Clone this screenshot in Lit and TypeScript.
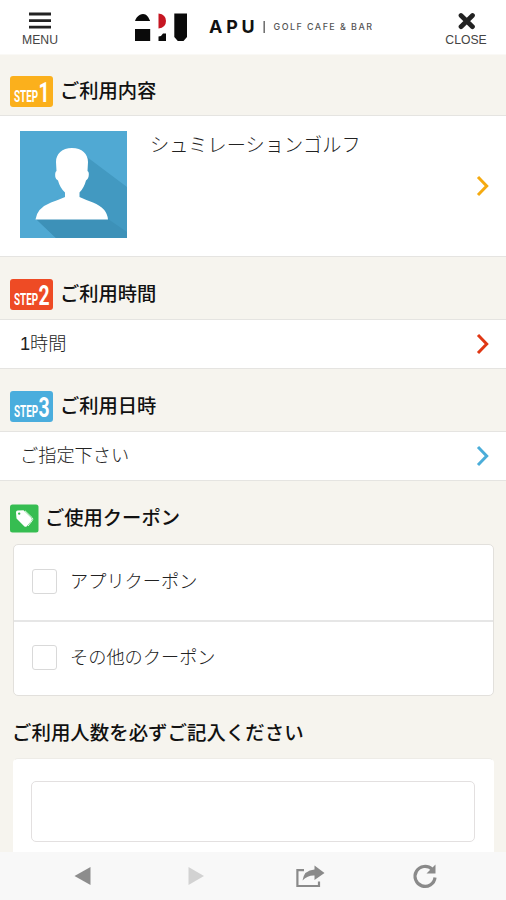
import { LitElement, html, css } from "lit";
import { customElement, property } from "lit/decorators.js";

const font = css`"Liberation Sans", "Noto Sans CJK JP", sans-serif`;

@customElement("step-badge")
class StepBadge extends LitElement {
  @property() num = "1";
  @property() color = "#fbb01c";
  static styles = css`
    :host { display: block; width: 43px; height: 31px; }
    svg { display: block; overflow: visible; }
    text { font-family: Roboto, "Liberation Sans", sans-serif; font-weight: 700; fill: #fff; }
    .word { font-size: 15.6px; }
    .num { font-size: 28.5px; }
  `;
  render() {
    return html`<svg width="43" height="31" viewBox="0 0 43 31">
      <rect width="43" height="31" rx="3" fill=${this.color}></rect>
      <text class="word" transform="translate(4 25.5) scale(.635 1)">STEP</text>
      <text class="num" transform="translate(28.6 25.5) scale(.68 1)">${this.num}</text>
    </svg>`;
  }
}

@customElement("section-title")
class SectionTitle extends LitElement {
  static styles = css`
    :host { display: flex; align-items: center; gap: 7px; height: 31px; padding: 0 10px; }
    .label { font: 500 19.3px/31px ${font}; color: #111; white-space: nowrap; }
  `;
  render() {
    return html`<slot name="icon"></slot><span class="label"><slot></slot></span>`;
  }
}

@customElement("link-row")
class LinkRow extends LitElement {
  @property() color = "#f5a912";
  static styles = css`
    :host {
      display: flex; align-items: center; justify-content: space-between;
      box-sizing: border-box; padding: 0 16px 0 20px; background: #fff;
      border-top: 1px solid #e5e4e1; border-bottom: 1px solid #e5e4e1;
      font: 300 18.2px/27px ${font}; color: #222;
    }
    .body { display: flex; flex: 1; }
  `;
  render() {
    return html`<div class="body"><slot></slot></div>
      <svg width="14" height="22" viewBox="0 0 14 22">
        <path d="M2 2 L10.700 11 L2 20" fill="none" stroke=${this.color} stroke-width="3"></path>
      </svg>`;
  }
}

@customElement("app-root")
class AppRoot extends LitElement {
  static styles = css`
    :host {
      display: flex; flex-direction: column; height: 900px; overflow: hidden;
      background: #f6f4ee; font-family: ${font}; color: #222;
    }
    header {
      display: flex; justify-content: space-between; flex: none; height: 55px;
      box-sizing: border-box; background: #fff; border-bottom: 1px solid #faf9f6;
    }
    .action {
      display: flex; flex-direction: column; align-items: center; width: 80px; gap: 3px;
      padding-top: 12px; box-sizing: border-box; font-size: 12.2px; line-height: 15px; color: #444;
    }
    .action svg { display: block; height: 18px; }
    .brand { display: flex; align-items: center; width: 238px; }
    .mark { margin: 0 21px 0 1px; flex: none; }
    .name { font: 700 18px/20px Inter, sans-serif; fill: #111; }
    .tag { font: 500 9px/10px Inter, sans-serif; fill: #555; }
    main { flex: 1; min-height: 0; overflow: hidden; }
    .t1 { margin-top: 21px; margin-bottom: 8px; }
    .t2 { margin-top: 22px; margin-bottom: 9px; }
    .t3 { margin-top: 22px; margin-bottom: 9px; }
    .t4 { margin-top: 22px; margin-bottom: 10px; gap: 6px; }
    .profile { height: 142px; }
    .single { height: 50px; }
    .photo { display: block; margin: -4px 23px 0 0; }
    .service { font-size: 19.2px; line-height: 28px; margin-top: -3px; }
    .card {
      margin: 0 12px 0 13px; background: #fff; border: 1px solid #e2e0dc;
      border-radius: 5px; box-sizing: border-box;
    }
    .option {
      display: flex; align-items: center; gap: 13px; height: 75px; box-sizing: border-box;
      padding-left: 18px; font: 300 18.2px/27px ${font};
    }
    .option + .option { border-top: 2px solid #e6e6e6; }
    .box {
      width: 25px; height: 25px; box-sizing: border-box; border: 1.5px solid #d9d9d9;
      border-radius: 3px; margin-top: -2px;
    }
    .question { margin: 23px 12px 10px; font: 500 19.45px/29px ${font}; color: #111; white-space: nowrap; }
    .form { padding: 22px 18px; height: 140px; border-color: #eeece7; border-left-color: #fff; border-right-color: #fff; }
    .input { height: 61px; border: 1px solid #e3e0e0; border-radius: 5px; box-sizing: border-box; margin: 0 0 0 -1px; }
    footer { flex: none; height: 48px; background: #f8f8f8; }
    footer svg { display: block; }
  `;

  render() {
    return html`
      <header>
        <div class="action">
          <svg width="22" height="18" viewBox="0 0 22 18"><path d="M0 2H22M0 8.700H22M0 15.200H22" stroke="#222" stroke-width="2.800"></path></svg>
          <span>MENU</span>
        </div>
        <div class="brand">
          <svg class="mark" width="52" height="29" viewBox="0 0 52 29">
            <path d="M0 8Q1 4 5 1.700Q8 .2 11 1.700Q14 4 15.200 8ZM0 16H15.200V28H0ZM23.500 23.500Q27 23 28 20.500H31V28H23.500ZM39.300 .5H52V24L48.500 28H42.800L39.300 24Z" fill="#0a0a0a"></path>
            <path d="M23.500 .5Q31 1.500 31 8Q31 14.500 23.500 15.500Z" fill="#c61622"></path>
          </svg>
          <svg width="165" height="24" viewBox="0 0 165 24">
            <text class="name" x="1" y="18" textLength="46">APU</text>
            <path d="M56.500 6V18" stroke="#444" stroke-width="1.200"></path>
            <text class="tag" x="66" y="15.500" textLength="99">GOLF CAFE &amp; BAR</text>
          </svg>
        </div>
        <div class="action">
          <svg width="20" height="18" viewBox="0 0 20 18"><path d="M5 3.500L16.500 14.700M16.500 3.500L5 14.700" stroke="#222" stroke-width="4.700" stroke-linecap="round"></path></svg>
          <span>CLOSE</span>
        </div>
      </header>
      <main>
        <section-title class="t1"><step-badge slot="icon" num="1" color="#fbb01c"></step-badge>ご利用内容</section-title>
        <link-row class="profile" color="#f5aa10">
          <svg class="photo" width="107" height="107" viewBox="0 0 107 107">
            <rect width="107" height="107" fill="#50a9d3"></rect>
            <path d="M67 26L107 56V107H36L16 88L45 60Z" fill="#4299c1"></path>
            <path d="M16 88H88L107 101V107H36Z" fill="#3d91b8"></path>
            <path d="M31 71.500L45 60V66Z" fill="#50a9d3"></path>
            <path d="M52 17C62 17 68 23 68 31L67.500 40Q69.500 41 68.500 46Q67.500 49 66 49.500Q64 57 59.500 61.500V66Q66 69 73 71.500Q87 77 88 88.500H15.500Q17 77 31 71.500Q38 69 45 66V61.500Q40 57 38 49.500Q36 49 35.300 46Q34.700 41 36.500 40L36 31C36 23 42 17 52 17Z" fill="#fff"></path>
          </svg>
          <span class="service">シュミレーションゴルフ</span>
        </link-row>
        <section-title class="t2"><step-badge slot="icon" num="2" color="#ee4b25"></step-badge>ご利用時間</section-title>
        <link-row class="single" color="#e03714">1時間</link-row>
        <section-title class="t3"><step-badge slot="icon" num="3" color="#4aaddd"></step-badge>ご利用日時</section-title>
        <link-row class="single" color="#4badd9">ご指定下さい</link-row>
        <section-title class="t4">
          <svg slot="icon" width="29" height="29" viewBox="0 0 29 29">
            <rect width="28.500" height="28" y=".5" rx="2.500" fill="#36bd51"></rect>
            <path fill-rule="evenodd" d="M6 8.500Q6 6.700 7.600 6.500L13.500 6.200L21.500 14Q22.500 15.500 21.300 16.900L16.800 22.300Q15.500 23.400 14.200 22.200L6.500 14.500ZM9.200 8.400A1.200 1.200 0 1 0 9.200 10.800A1.200 1.200 0 1 0 9.200 8.400Z" fill="#fff"></path>
            <path d="M15 6.800L22.500 14Q23.200 15.500 22.200 16.700L18 22" fill="none" stroke="#e9f9eb" stroke-width="1"></path>
          </svg>ご使用クーポン</section-title>
        <div class="card">
          <div class="option"><span class="box"></span>アプリクーポン</div>
          <div class="option"><span class="box"></span>その他のクーポン</div>
        </div>
        <div class="question">ご利用人数を必ずご記入ください</div>
        <div class="card form"><div class="input"></div></div>
      </main>
      <footer>
        <svg width="506" height="48" viewBox="0 0 506 48">
          <path d="M74.500 24L90.500 15V33Z" fill="#8d8d8d"></path>
          <path d="M204 24L188.500 15V33Z" fill="#d2d2d2"></path>
          <path d="M304 18.200H297.400V34H319V29.500" fill="none" stroke="#8a8a8a" stroke-width="2.200"></path>
          <path d="M302.500 28.500Q304 18 314.500 17.500V13.500L324.500 21L314.500 28V23.500Q308 23 302.500 28.500Z" fill="#8a8a8a"></path>
          <path d="M432 17.200A10 10 0 1 0 435 25.500" fill="none" stroke="#8a8a8a" stroke-width="3.200"></path>
          <path d="M435.500 12.500V21.500H426.500Z" fill="#8a8a8a"></path>
        </svg>
      </footer>
    `;
  }
}
